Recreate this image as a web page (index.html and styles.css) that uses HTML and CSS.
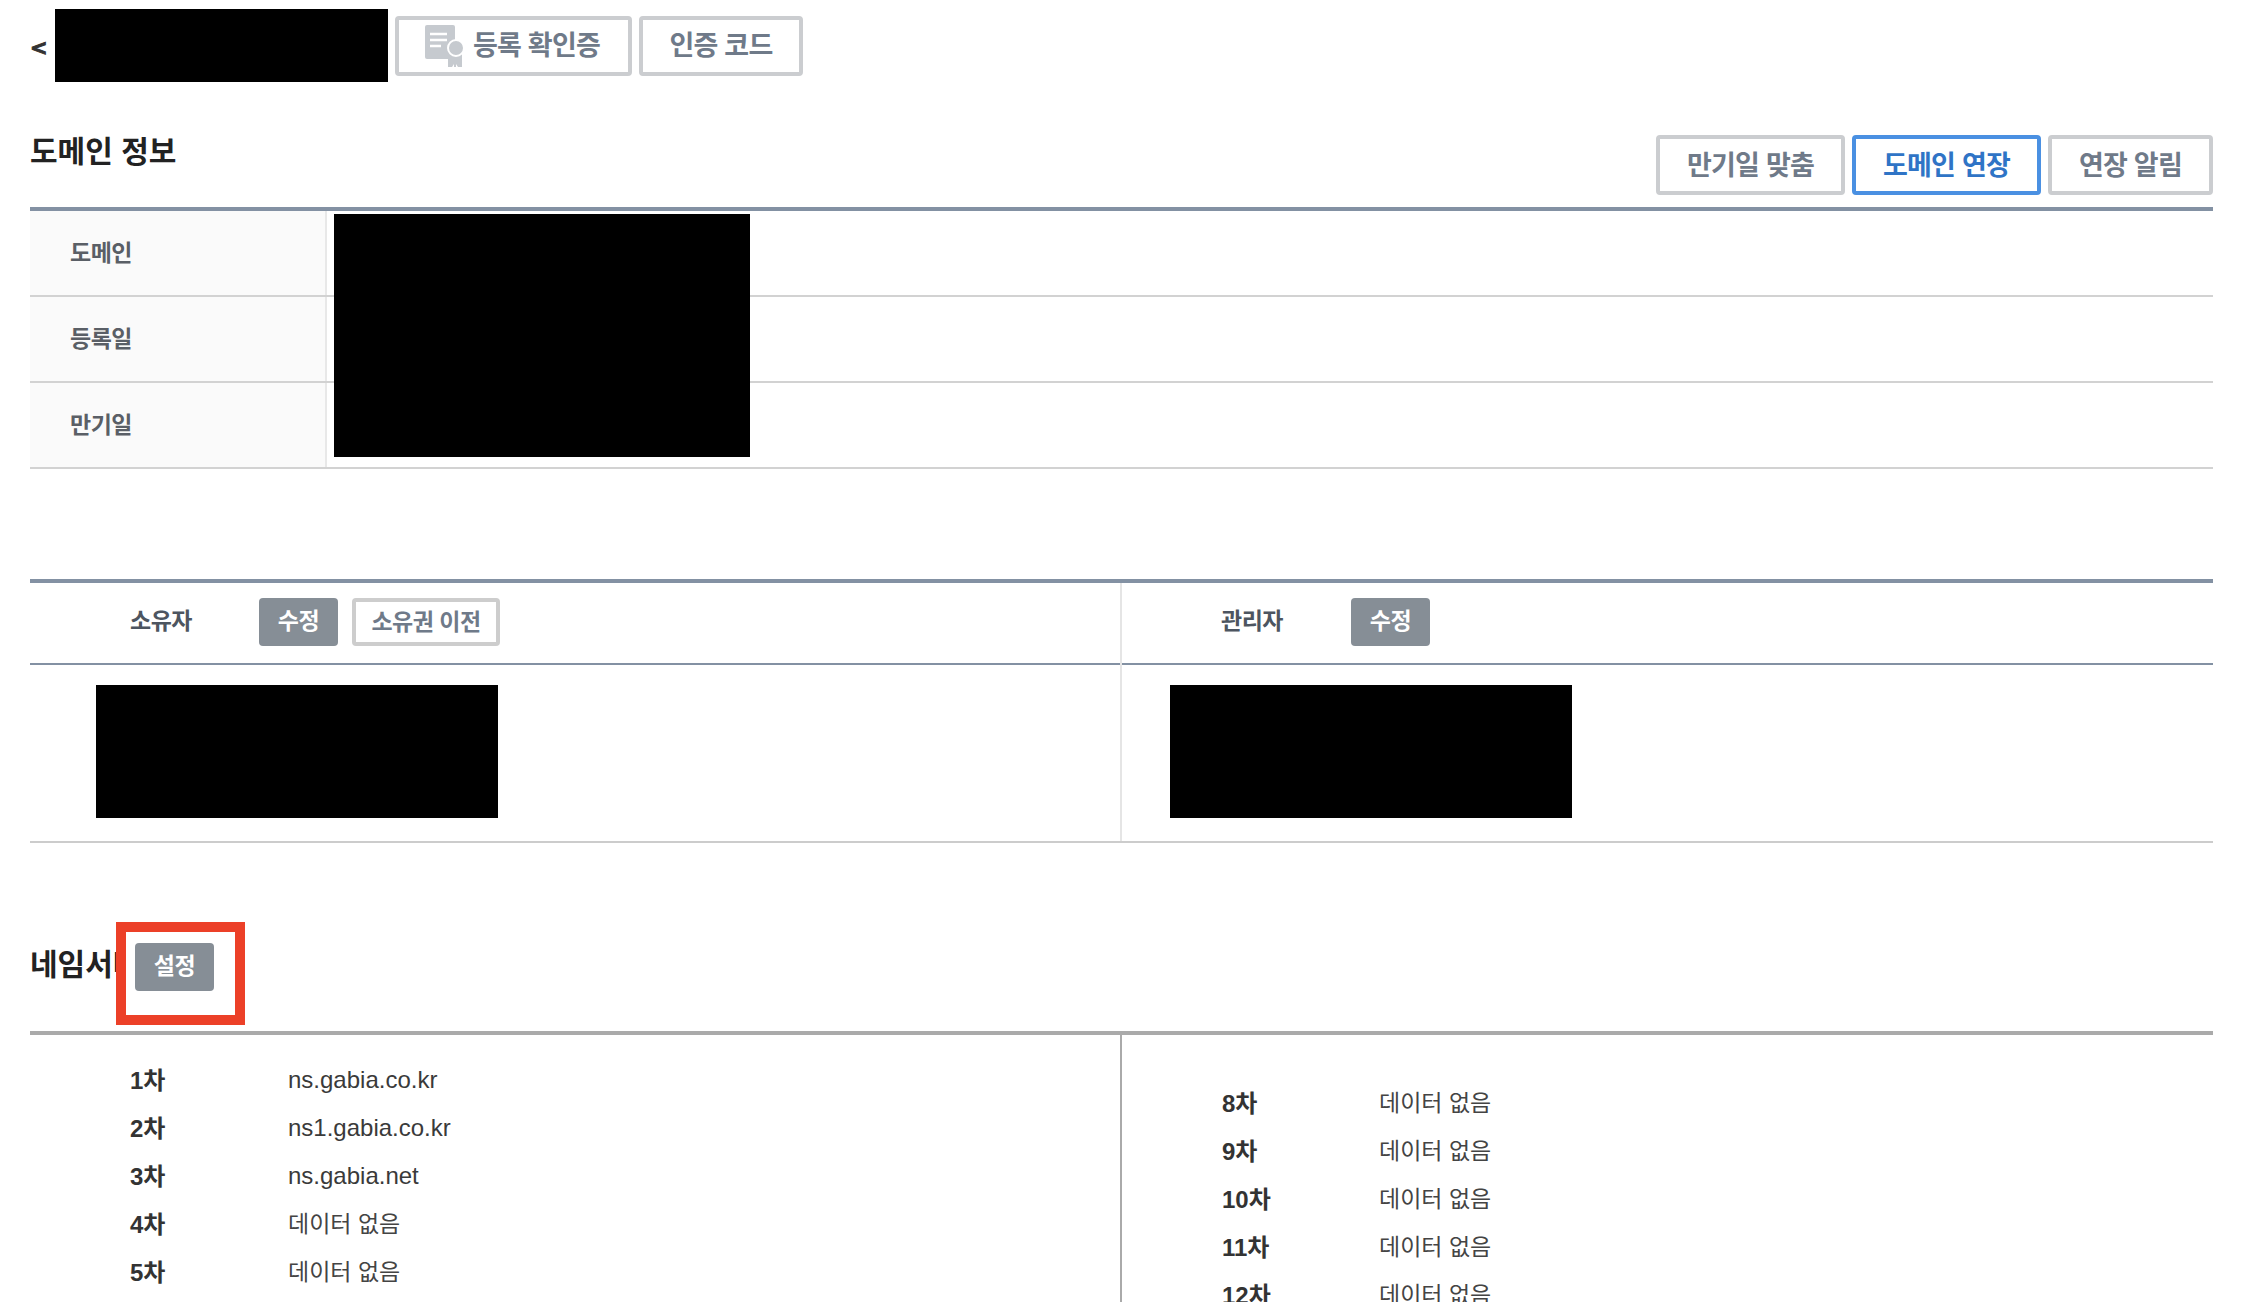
FILE: index.html
```html
<!DOCTYPE html>
<html lang="ko">
<head>
<meta charset="utf-8">
<title>도메인 정보</title>
<link rel="stylesheet" href="styles.css">
</head>
<body>
<main class="page">
  <div class="topbar">
    <span class="back">&lt;</span>
    <div class="redact redact-name"></div>
    <div class="btn-row">
      <a class="btn btn-cert">
        <svg class="cert" viewBox="0 0 38 42" width="38" height="42" aria-hidden="true">
          <rect x="0" y="0" width="30" height="34" rx="2" fill="#c6cacf"/>
          <path d="M5 9h17M5 15h17M5 21h11" stroke="#fff" stroke-width="2.4" fill="none"/>
          <path d="M23 28h14v14h-4l-2-3v3h-2v-3l-2 3h-4z" fill="#c6cacf"/>
          <circle cx="31" cy="23" r="8" fill="#c6cacf" stroke="#fff" stroke-width="2"/>
        </svg>
        등록 확인증
      </a>
      <a class="btn btn-code">인증 코드</a>
    </div>
  </div>

  <div class="info-head">
    <h2 class="title">도메인 정보</h2>
    <div class="btn-row">
      <a class="btn btn-wide">만기일 맞춤</a>
      <a class="btn btn-wide btn-primary">도메인 연장</a>
      <a class="btn btn-notice">연장 알림</a>
    </div>
  </div>

  <div class="info-table">
    <div class="info-row"><div class="info-label">도메인</div><div class="info-value"></div></div>
    <div class="info-row"><div class="info-label">등록일</div><div class="info-value"></div></div>
    <div class="info-row"><div class="info-label">만기일</div><div class="info-value"></div></div>
    <div class="redact redact-info"></div>
  </div>

  <div class="contacts">
    <section class="contact contact-left">
      <div class="contact-head">
        <span class="contact-label">소유자</span>
        <a class="chip chip-solid">수정</a>
        <a class="chip chip-line">소유권 이전</a>
      </div>
      <div class="contact-body"><div class="redact redact-contact"></div></div>
    </section>
    <section class="contact contact-right">
      <div class="contact-head">
        <span class="contact-label">관리자</span>
        <a class="chip chip-solid">수정</a>
      </div>
      <div class="contact-body contact-body-right"><div class="redact redact-contact"></div></div>
    </section>
  </div>

  <div class="ns-head">
    <h2 class="title ns-title">네임서버</h2>
    <a class="chip chip-solid">설정</a>
    <div class="annotation"></div>
  </div>

  <div class="ns-body">
    <div class="ns-col ns-left">
      <div class="ns-row"><b>1차</b><span class="ns-host">ns.gabia.co.kr</span></div>
      <div class="ns-row"><b>2차</b><span class="ns-host">ns1.gabia.co.kr</span></div>
      <div class="ns-row"><b>3차</b><span class="ns-host">ns.gabia.net</span></div>
      <div class="ns-row"><b>4차</b><span class="ns-empty">데이터 없음</span></div>
      <div class="ns-row"><b>5차</b><span class="ns-empty">데이터 없음</span></div>
      <div class="ns-row"><b>6차</b><span class="ns-empty">데이터 없음</span></div>
      <div class="ns-row"><b>7차</b><span class="ns-empty">데이터 없음</span></div>
    </div>
    <div class="ns-col ns-right">
      <div class="ns-row"><b>8차</b><span class="ns-empty">데이터 없음</span></div>
      <div class="ns-row"><b>9차</b><span class="ns-empty">데이터 없음</span></div>
      <div class="ns-row"><b>10차</b><span class="ns-empty">데이터 없음</span></div>
      <div class="ns-row"><b>11차</b><span class="ns-empty">데이터 없음</span></div>
      <div class="ns-row"><b>12차</b><span class="ns-empty">데이터 없음</span></div>
      <div class="ns-row"><b>13차</b><span class="ns-empty">데이터 없음</span></div>
    </div>
  </div>
</main>
</body>
</html>
```
FILE: styles.css
```css
* { box-sizing: border-box; }
html, body { margin: 0; height: 1302px; overflow: hidden; background: #fff; }
body { font-family: "Liberation Sans", "Noto Sans CJK KR", sans-serif; color: #333; }
.page { padding: 9px 31px 0 30px; }
.redact { background: #000; }

.topbar { display: flex; align-items: center; height: 73px; }
.back { width: 25px; font-family: "DejaVu Sans", sans-serif; font-size: 21px; font-weight: 700; color: #333; padding-bottom: 0; padding-top: 4px; -webkit-text-stroke: 1px #333; }
.redact-name { width: 333px; height: 73px; margin-right: 7px; }
.btn-row { display: flex; gap: 7px; }
.btn {
  display: flex; align-items: center; justify-content: center; height: 60px; padding-bottom: 4px;
  border: 4px solid #cbcdd0; border-radius: 4px; background: #fff;
  font-family: "Noto Sans CJK KR", sans-serif; font-size: 27px; font-weight: 700;
  color: #6f7a89; letter-spacing: -0.8px; white-space: nowrap;
}
.btn-cert { width: 237px; padding-right: 2px; }
.btn-code { width: 164px; }
.btn-wide { width: 189px; }
.btn-notice { width: 165px; }
.cert { margin-right: 10px; margin-top: 4px; }
.btn-primary { border-color: #4a90e2; color: #2f74c6; }

.info-head { display: flex; justify-content: space-between; margin-top: 53px; height: 60px; margin-bottom: 12px; }
.title {
  margin: 0; font-family: "Noto Sans CJK KR", sans-serif; font-size: 30px; font-weight: 700;
  line-height: 28px; color: #222; white-space: nowrap;
}

.info-table { position: relative; border-top: 4px solid #8391a3; }
.info-row { display: flex; height: 86px; border-bottom: 2px solid #d2d2d2; }
.info-label {
  display: flex; align-items: center; width: 297px; padding: 0 0 5px 40px; background: #fafafa;
  border-right: 2px solid #e8e8e8;
  font-family: "Noto Sans CJK KR", sans-serif; font-size: 23px; font-weight: 700; color: #5a5f66; letter-spacing: -0.5px;
}
.info-value { flex: 1; }
.redact-info { position: absolute; left: 304px; top: 3px; width: 416px; height: 243px; }

.contacts { display: grid; grid-template-columns: 1092px 1fr; margin-top: 110px; border-top: 4px solid #8391a3; border-bottom: 2px solid #ccc; }
.contact-left { border-right: 2px solid #e5e5e5; }
.contact-head { display: flex; align-items: center; height: 82px; padding: 0 0 2px 100px; border-bottom: 2px solid #8391a3; }
.contact-right .contact-head { padding-left: 99px; }
.contact-label {
  width: 129px; font-family: "Noto Sans CJK KR", sans-serif; font-size: 23px; font-weight: 700;
  color: #4d5560; letter-spacing: -0.5px; padding-bottom: 6px;
}
.contact-right .contact-label { width: 130px; }
.chip {
  display: flex; align-items: center; justify-content: center; height: 48px; padding-bottom: 6px; border-radius: 4px;
  font-family: "Noto Sans CJK KR", sans-serif; font-size: 23px; font-weight: 700; letter-spacing: -0.5px; white-space: nowrap;
}
.chip-solid { width: 79px; background: #868e96; color: #fff; flex: none; }
.chip-line { width: 148px; margin-left: 14px; background: #fff; border: 4px solid #cdcdcd; color: #6f7a89; padding-bottom: 4px; }
.contact-body { height: 176px; padding: 20px 0 0 66px; }
.contact-body-right { padding-left: 48px; }
.redact-contact { width: 402px; height: 133px; }

.ns-head { position: relative; display: flex; align-items: flex-start; margin-top: 100px; height: 88px; }
.ns-title { width: 86px; margin-right: 19px; line-height: 38px; overflow: hidden; }
.annotation { position: absolute; left: 86px; top: -21px; width: 129px; height: 103px; border: 10px solid #ec4028; }

.ns-body { display: grid; grid-template-columns: 1092px 1fr; height: 300px; border-top: 4px solid #aaa; }
.ns-col { padding-left: 100px; }
.ns-left { padding-top: 20px; border-right: 2px solid #aaa; }
.ns-right { padding-top: 43px; }
.ns-row { display: flex; align-items: center; height: 48px; font-size: 24px; color: #333; }
.ns-row b { width: 158px; font-weight: 700; padding-bottom: 2px; }
.ns-right .ns-row b { width: 157px; }
.ns-host { color: #3a3a3a; padding-top: 2px; }
.ns-empty { color: #444; font-family: "Noto Sans CJK KR", sans-serif; font-size: 23px; padding-bottom: 3px; }
```
